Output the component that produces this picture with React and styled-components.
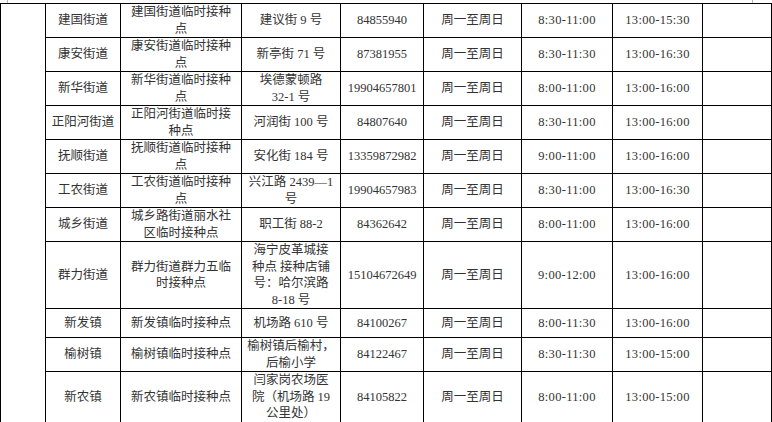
import React from 'react';
import styled, { createGlobalStyle } from 'styled-components';

const GlobalStyle = createGlobalStyle`
  html, body {
    margin: 0;
    padding: 0;
    background: #ffffff;
  }
  body {
    font-family: "Liberation Serif", "Noto Sans CJK SC", serif;
    color: #333333;
  }
`;

const COLS = [45, 75, 121, 99, 83, 98, 91, 90, 69];

// each row: [height, town, site lines, address lines, phone, early, late]
const rows = [
  [34, '建国街道', ['建国街道临时接种', '点'], ['建议街 9 号'], '84855940', '8:30-11:00', '13:00-15:30'],
  [34, '康安街道', ['康安街道临时接种', '点'], ['新亭街 71 号'], '87381955', '8:30-11:30', '13:00-16:30'],
  [34, '新华街道', ['新华街道临时接种', '点'], ['埃德蒙顿路', '32-1 号'], '19904657801', '8:00-11:00', '13:00-16:00'],
  [34, '正阳河街道', ['正阳河街道临时接', '种点'], ['河润街 100 号'], '84807640', '8:30-11:00', '13:00-16:00'],
  [34, '抚顺街道', ['抚顺街道临时接种', '点'], ['安化街 184 号'], '13359872982', '9:00-11:00', '13:00-16:00'],
  [34, '工农街道', ['工农街道临时接种', '点'], ['兴江路 2439—1', '号'], '19904657983', '8:30-11:00', '13:00-16:30'],
  [33, '城乡街道', ['城乡路街道丽水社', '区临时接种点'], ['职工街 88-2'], '84362642', '8:00-11:00', '13:00-16:00'],
  [67, '群力街道', ['群力街道群力五临', '时接种点'], ['海宁皮革城接', '种点 接种店铺', '号：哈尔滨路', '8-18 号'], '15104672649', '9:00-12:00', '13:00-16:00'],
  [29, '新发镇', ['新发镇临时接种点'], ['机场路 610 号'], '84100267', '8:00-11:30', '13:00-16:00'],
  [33, '榆树镇', ['榆树镇临时接种点'], ['榆树镇后榆村，', '后榆小学'], '84122467', '8:30-11:30', '13:00-15:00'],
  [50, '新农镇', ['新农镇临时接种点'], ['闫家岗农场医', '院（机场路 19', '公里处）'], '84105822', '8:00-11:00', '13:00-15:00'],
];

export default function App() {
  const renderLines = (lines) => lines.map((line, i) => (
    <Line key={i}>{line}</Line>
  ));

  return (
    <Page>
      <GlobalStyle />
      <CropMarks>
        <Mark />
        <Mark />
      </CropMarks>
      <Sheet>
        <colgroup>
          {COLS.map((w, i) => <col key={i} style={{ width: w }} />)}
        </colgroup>
        <tbody>
          {rows.map(([h, town, site, addr, phone, early, late], index) => (
            <Row key={town} $h={h}>
              {index === 0 && <Cell rowSpan={rows.length} />}
              <Cell>{town}</Cell>
              <Cell>{renderLines(site)}</Cell>
              <Cell $tight>{renderLines(addr)}</Cell>
              <Cell>{phone}</Cell>
              <Cell>周一至周日</Cell>
              <Cell $spaced>{early}</Cell>
              <Cell $spaced>{late}</Cell>
              <Cell />
            </Row>
          ))}
        </tbody>
      </Sheet>
    </Page>
  );
}

const Page = styled.div`
  width: 772px;
  height: 422px;
  overflow: hidden;
  background: #ffffff;
`;

const CropMarks = styled.div`
  display: flex;
  justify-content: space-between;
  height: 3px;
  padding: 0 19px 0 7px;
`;

const Mark = styled.div`
  width: 1px;
  height: 3px;
  background: #b4b4b4;
`;

const Sheet = styled.table`
  border-collapse: collapse;
  table-layout: fixed;
  width: 771px;
`;

const Row = styled.tr`
  height: ${(p) => p.$h}px;
`;

const Cell = styled.td`
  border: 1px solid #000000;
  padding: 0 ${(p) => (p.$tight ? 2 : 4)}px;
  text-align: center;
  vertical-align: middle;
  font-size: 12.5px;
  line-height: 16.5px;
  letter-spacing: ${(p) => (p.$spaced ? '0.3px' : 'normal')};
  white-space: nowrap;
  overflow: hidden;
`;

const Line = styled.div`
  display: block;
`;
